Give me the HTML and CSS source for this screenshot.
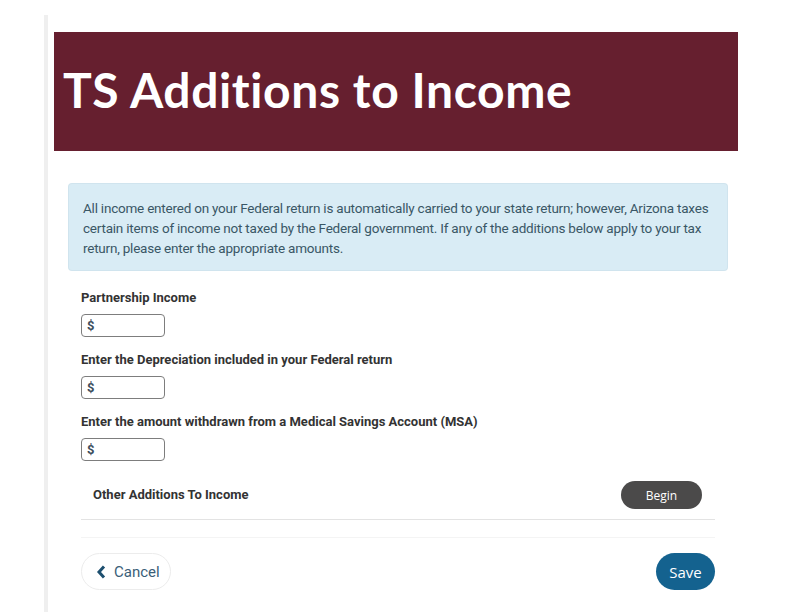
FILE: index.html
```html
<!DOCTYPE html>
<html lang="en">
<head>
<meta charset="utf-8">
<title>TS Additions to Income</title>
<link rel="stylesheet" href="styles.css">
</head>
<body>
<div class="frame">
  <header class="banner">
    <h1 class="title">TS Additions to Income</h1>
  </header>
  <main class="content">
    <div class="info">All income entered on your Federal return is automatically carried to your state return; however, Arizona taxes certain items of income not taxed by the Federal government. If any of the additions below apply to your tax return, please enter the appropriate amounts.</div>
    <div class="form">
      <div class="field">
        <label class="label">Partnership Income</label>
        <div class="input"><span class="dollar">$</span></div>
      </div>
      <div class="field">
        <label class="label">Enter the Depreciation included in your Federal return</label>
        <div class="input"><span class="dollar">$</span></div>
      </div>
      <div class="field">
        <label class="label">Enter the amount withdrawn from a Medical Savings Account (MSA)</label>
        <div class="input"><span class="dollar">$</span></div>
      </div>
    </div>
    <div class="other">
      <span class="other-label">Other Additions To Income</span>
      <button class="begin">Begin</button>
    </div>
    <div class="spacer"></div>
    <div class="actions">
      <button class="cancel"><svg class="chev" width="10" height="14" viewBox="0 0 10 14"><path d="M8 1.5 L3 7 L8 12.5" fill="none" stroke="#1d4f6f" stroke-width="3" stroke-linejoin="miter"/></svg>Cancel</button>
      <button class="save">Save</button>
    </div>
  </main>
</div>
</body>
</html>
```
FILE: styles.css
```css
html, body {
  margin: 0;
  padding: 0;
  background: #ffffff;
}
.frame {
  margin: 15px 0 0 44px;
  border-left: 4px solid #efefef;
  height: 597px;
  padding: 17px 0 0 6px;
  box-sizing: border-box;
  width: 700px;
}
.banner {
  width: 684px;
  height: 119px;
  background: #661f2f;
  box-sizing: border-box;
  padding: 34px 0 0 9px;
}
.title {
  margin: 0;
  font-family: "Lato", "Open Sans", sans-serif;
  font-weight: 700;
  font-size: 48px;
  line-height: 48px;
  color: #ffffff;
  font-variant-ligatures: none;
  font-feature-settings: "liga" 0;
  letter-spacing: 0.6px;
}
.content {
  padding: 33px 0 0 15px;
  width: 658px;
}
.info {
  background: #d9ecf5;
  border-radius: 3px;
  box-shadow: 0 0 0 1px #d0e4ee;
  height: 86px;
  box-sizing: border-box;
  padding: 14px 8px 0 14px;
  font-family: "Roboto", "Liberation Sans", sans-serif;
  font-size: 13.5px;
  line-height: 20px;
  color: #3a5766;
  letter-spacing: -0.22px;
}
.form {
  padding: 20px 0 0 12px;
  display: flex;
  flex-direction: column;
  gap: 15px;
}
.field {
  display: flex;
  flex-direction: column;
  gap: 8px;
}
.label {
  font-family: "Roboto", "Liberation Sans", sans-serif;
  font-weight: 700;
  font-size: 13px;
  line-height: 16px;
  color: #333333;
}
.input {
  width: 84px;
  height: 23px;
  box-sizing: border-box;
  border: 1px solid #7d7d7d;
  border-radius: 4px;
  display: flex;
  align-items: center;
  padding-left: 5px;
}
.dollar {
  font-family: "Roboto", "Liberation Sans", sans-serif;
  font-weight: 700;
  font-size: 13px;
  color: #3d4d5c;
}
.other {
  margin: 20px 0 0 12px;
  width: 634px;
  height: 39px;
  box-sizing: border-box;
  border-bottom: 1px solid #e3e3e3;
  display: flex;
  justify-content: space-between;
  align-items: flex-start;
  padding: 0 13px 0 12px;
}
.other-label {
  font-family: "Roboto", "Liberation Sans", sans-serif;
  font-weight: 700;
  font-size: 13px;
  line-height: 28px;
  color: #333333;
}
.begin {
  width: 81px;
  height: 28px;
  border: none;
  border-radius: 14px;
  background: #4b4a4a;
  color: #ffffff;
  font-family: "Open Sans", "Liberation Sans", sans-serif;
  font-size: 12px;
  padding: 0;
}
.spacer {
  margin-left: 12px;
  width: 634px;
  height: 17px;
  border-bottom: 1px solid #f4f4f4;
}
.actions {
  margin: 15px 0 0 12px;
  width: 634px;
  display: flex;
  justify-content: space-between;
}
.cancel {
  width: 90px;
  height: 37px;
  border: 1px solid #ececec;
  border-radius: 19px;
  background: #ffffff;
  display: flex;
  align-items: center;
  justify-content: flex-start;
  gap: 8px;
  font-family: "Roboto", "Liberation Sans", sans-serif;
  font-size: 15px;
  color: #3a5e78;
  padding: 0 0 0 14px;
}
.chev {
  display: block;
}
.save {
  width: 59px;
  height: 37px;
  border: none;
  border-radius: 19px;
  background: #14628f;
  color: #ffffff;
  font-family: "Open Sans", "Liberation Sans", sans-serif;
  font-size: 15px;
  padding: 0;
}
```
